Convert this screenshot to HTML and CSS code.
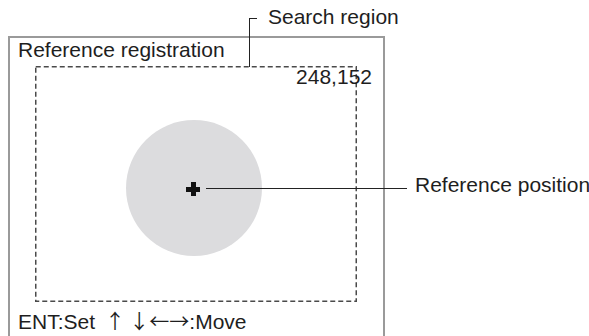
FILE: index.html
```html
<!DOCTYPE html>
<html lang="en">
<head>
<meta charset="UTF-8">
<meta name="viewport" content="width=device-width, initial-scale=1.0">
<title>Reference registration</title>
<link rel="stylesheet" href="styles.css">
</head>
<body>
<div id="figure">
    <!-- 화면 -->
    <div class="screen">
        <div class="title">Reference registration</div>
        <div class="region">
            <svg class="regionLine" width="100%" height="100%">
                <rect x="0.75" y="0.75" width="320.5" height="234.5" fill="none" stroke="#4a4a4a" stroke-width="1.5" stroke-dasharray="5 3"></rect>
            </svg>
            <div class="spot"></div>
            <div class="plus"></div>
            <div class="coord">248,152</div>
        </div>
        <div class="guide">ENT:Set <span class="arrows">↑&#xFE0E; ↓&#xFE0E;←→</span>:Move</div>
    </div>
    <!-- 설명선 -->
    <div class="bracket"></div>
    <div class="label searchLabel">Search region</div>
    <div class="leader"></div>
    <div class="label posLabel">Reference position</div>
</div>
</body>
</html>
```
FILE: styles.css
```css
body{
    margin: 0;
    font-family: "Liberation Sans", Arial, sans-serif;
    color: #1e1e1e;
    background-color: #fff;
}
#figure{
    width: 589px;
    height: 336px;
    position: relative;
    overflow: hidden;
}
.screen{
    width: 377px;
    height: 300px;
    box-sizing: border-box;
    margin-left: 8px;
    margin-top: 36px;
    border-left: 2px solid #9a9a9a;
    border-right: 2px solid #9a9a9a;
    border-top: 2px solid #9a9a9a;
}
.title, .guide{
    font-size: 21px;
    line-height: 23px;
    padding-left: 8px;
}
.region{
    width: 322px;
    height: 236px;
    margin-left: 25px;
    margin-top: 5px;
    position: relative;
}
.regionLine{
    display: block;
}
.spot{
    position: absolute;
    left: 91px;
    top: 54px;
    width: 136px;
    height: 136px;
    border-radius: 50%;
    background-color: #dcdcde;
}
.plus{
    position: absolute;
    left: 151px;
    top: 116px;
    width: 14px;
    height: 14px;
    background:
        linear-gradient(#111, #111) center / 14px 5px no-repeat,
        linear-gradient(#111, #111) center / 5px 14px no-repeat;
}
.coord{
    position: absolute;
    right: -15px;
    top: -1px;
    font-size: 21px;
    line-height: 23px;
}
.guide{
    margin-top: 7px;
    white-space: nowrap;
}
.arrows{
    font-family: "Noto Sans CJK JP", sans-serif;
    font-size: 20px;
    margin-left: 4px;
}
.bracket{
    position: absolute;
    left: 249px;
    top: 18px;
    width: 7px;
    height: 48px;
    border-left: 1px solid #222;
    border-top: 1px solid #222;
}
.label{
    position: absolute;
    font-size: 21px;
    line-height: 23px;
    white-space: nowrap;
}
.searchLabel{
    left: 268px;
    top: 5px;
}
.leader{
    position: absolute;
    left: 206px;
    top: 188px;
    width: 201px;
    height: 1px;
    background-color: #222;
}
.posLabel{
    left: 415px;
    top: 173px;
}
```
